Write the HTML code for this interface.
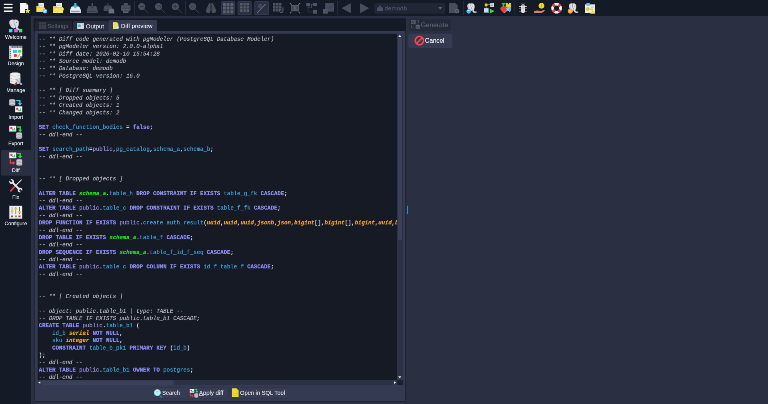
<!DOCTYPE html>
<html lang="en"><head><meta charset="utf-8"><title>pgModeler - Diff preview</title>
<style>
html,body{margin:0;padding:0;background:#2a2f42;overflow:hidden;}
body{width:768px;height:404px;position:relative;}
#root{position:absolute;left:0;top:0;width:1920px;height:1010px;transform:scale(0.4);transform-origin:0 0;will-change:transform;
  background:#2a2f42;font-family:"Liberation Sans",sans-serif;color:#e8e8ee;overflow:hidden;text-shadow:0 0 0.7px currentColor;}
#root *{box-sizing:border-box;}
.abs{position:absolute;}
#toolbar{left:0;top:0;width:1920px;height:40px;background:#151b26;}
#sidebar{left:0;top:40px;width:77.5px;height:970px;background:#151b26;}
.sb{position:absolute;left:1.5px;width:77px;height:64px;border-radius:5px 0 0 5px;}
.sb.sel{background:#2a2f42;}
.sb svg{position:absolute;left:21px;top:6px;width:33px;height:33px;}
.sb .lb{position:absolute;left:-10px;right:-9px;top:42px;text-align:center;font-size:13px;line-height:18px;color:#dcdde4;}
.tbi{position:absolute;top:7px;width:27px;height:27px;}
.tbi svg{width:27px;height:27px;display:block;}
.tsep{position:absolute;top:3px;width:2px;height:34px;background:#262b3a;}
.tgl{position:absolute;top:3px;width:35px;height:35px;background:#2a2f42;border:2px solid #333950;border-radius:4px;}
#tabbar{left:84px;top:46px;width:931px;height:32px;background:#151b26;}
.tab{position:absolute;font-size:15px;white-space:nowrap;}
.tab svg{position:absolute;}
.tab span{position:absolute;}
#pane{left:85px;top:77px;width:931px;height:927.5px;background:#343a51;border:solid #212634;border-width:0 3.5px 2.5px 2.5px;border-radius:0 0 5px 5px;}
#editor{left:93.5px;top:84px;width:913px;height:878px;background:#161a25;overflow:hidden;}
#code{position:absolute;left:3.5px;top:4.8px;font-family:"Liberation Mono",monospace;font-size:14px;line-height:18.39px;white-space:pre;color:#e4e4ea;text-shadow:0 0 1px currentColor;}
.ln{height:18.39px;}
.c{color:#b0b1ba;font-style:italic;}
.k{color:#878aec;font-weight:bold;}
.i{color:#3c9bd2;}
.p{color:#9189de;}
.g{color:#1fd41f;font-weight:bold;font-style:italic;}
.t{color:#f0a020;font-weight:bold;font-style:italic;}
#vsb{left:899.5px;top:0;width:13.5px;height:866px;background:#2c3145;}
#vsb .h{position:absolute;left:1.5px;top:10px;width:10.5px;height:505px;background:#3a4059;border-radius:2px;}
#hsb{left:0;top:866px;width:899.5px;height:12px;background:#2c3145;}
.ab{position:absolute;background:#31374c;}
#hsb .h{position:absolute;left:10px;top:0.5px;width:330px;height:11px;background:#3a4059;border-radius:2px;}
#corner{left:899.5px;top:866px;width:13.5px;height:12px;background:#1d212d;}
.btn{position:absolute;top:967.5px;height:29px;background:#363c53;border:1.5px solid #2e3348;border-radius:5px;font-size:14px;color:#d8d8df;white-space:nowrap;}
.btn svg{position:absolute;}
.btn span{position:absolute;top:5.5px;line-height:17px;}
#gen{left:1023px;top:46.5px;width:105px;height:30.5px;background:#252a39;border-radius:4px;color:#595e6f;font-size:16.4px;}
#cancel{left:1020.5px;top:83.5px;width:110px;height:36px;background:#353b53;border-radius:5px;color:#eeeef2;font-size:15.6px;}
#split{left:1017.5px;top:514px;width:2.5px;height:21px;background:#2c8ed2;}
</style></head>
<body>
<div id="root">
<div id="toolbar" class="abs"><div class="tgl" style="left:552.5px;width:34.4px"></div><div class="tgl" style="left:593.8px;width:35.2px"></div><div class="tgl" style="left:635.8px;width:35.8px"></div><div class="tsep" style="left:335.2px"></div><div class="tsep" style="left:462.5px"></div><div class="tsep" style="left:842.8px"></div><div class="tsep" style="left:1157.8px"></div><div class="tsep" style="left:1285.9px"></div><div class="tbi" style="left:6.8px"><svg viewBox="0 0 26 26"><rect x="2.4" y="2.2" width="21.2" height="3.5" rx="1" fill="#f0f0f3"/><rect x="2.4" y="10.3" width="21.2" height="3.5" rx="1" fill="#f0f0f3"/><rect x="2.4" y="18.6" width="21.2" height="3.5" rx="1" fill="#f0f0f3"/></svg></div><div class="tbi" style="left:48.8px"><svg viewBox="0 0 26 26"><path d="M1 0 H15 L21 6 V15 H13 V25 H1 Z" fill="#f6f6f8"/><path d="M15 0 V6 H21 Z" fill="#c8c9cf"/><path d="M19.5 13 L21.4 17.4 L26 17.8 L22.5 20.8 L23.6 25.4 L19.5 23 L15.4 25.4 L16.5 20.8 L13 17.8 L17.6 17.4 Z" fill="#f3e35c"/></svg></div><div class="tbi" style="left:90.5px"><svg viewBox="0 0 26 26"><rect x="5" y="0" width="13" height="12" fill="#f3f3f5"/><path d="M7 3h8M7 6h8" stroke="#aaa" stroke-width="1"/><path d="M0 7.5 H7 L9 10 H19 V22 H0 Z" fill="#e9d040"/><path d="M0 22 L2.5 12 H21 L19 22 Z" fill="#f5e362"/><circle cx="20.5" cy="20" r="5.6" fill="#40c4f0"/><circle cx="20.5" cy="20" r="3.3" fill="#e9f6ff"/><path d="M20.5 18 V20.3 H22.4" stroke="#2277bb" stroke-width="1" fill="none"/></svg></div><div class="tbi" style="left:132.5px"><svg viewBox="0 0 26 26"><rect x="7" y="0" width="14" height="12" fill="#f3f3f5"/><path d="M9 3h9M9 6h9" stroke="#aaa" stroke-width="1"/><path d="M0 8 H8 L10 10.5 H24 V24.5 H0 Z" fill="#e9d040"/><path d="M0 24.5 L3 13 H26 L23 24.5 Z" fill="#f5e362"/></svg></div><div class="tbi" style="left:174.5px"><svg viewBox="0 0 26 26"><path d="M4 9 H22 L26 17 V25 H0 V17 Z" fill="#e9edf2"/><path d="M0 17 H26 V25 H0 Z" fill="#d5dbe3"/><rect x="3" y="19.5" width="20" height="2.4" fill="#8a93a0"/><rect x="10.3" y="0" width="5.4" height="7" fill="#38b4ee"/><path d="M6.5 6.5 H19.5 L13 14 Z" fill="#38b4ee"/></svg></div><div class="tbi" style="left:216.5px"><svg viewBox="0 0 26 26"><path d="M3.5 8 H22.5 L26 17 V25 H0 V17 Z" fill="#494d5c"/><rect x="3" y="19" width="20" height="2.6" fill="#151b26" opacity="0.3"/><rect x="11.4" y="0" width="3.2" height="9" fill="#494d5c"/><path d="M7.5 8 H18.5 L13 15 Z" fill="#3c404e"/></svg></div><div class="tbi" style="left:259.0px"><svg viewBox="0 0 26 26"><g transform="scale(0.8)"><path d="M3.5 8 H22.5 L26 17 V25 H0 V17 Z" fill="#494d5c"/><rect x="3" y="19" width="20" height="2.6" fill="#151b26" opacity="0.3"/><rect x="11.4" y="0" width="3.2" height="9" fill="#494d5c"/><path d="M7.5 8 H18.5 L13 15 Z" fill="#3c404e"/></g><g transform="translate(12,12) scale(0.54)"><path d="M4 4 H22 L26 17 V25 H0 V17 Z" fill="#6a6f80"/></g></svg></div><div class="tbi" style="left:300.8px"><svg viewBox="0 0 26 26"><rect x="8" y="0" width="10" height="7" fill="#494d5c"/><rect x="1.5" y="6" width="23" height="13" rx="2.5" fill="#494d5c"/><rect x="6.5" y="15.5" width="13" height="9.5" fill="#5d6170"/><path d="M8 18.5h10M8 21.5h10" stroke="#151b26" stroke-width="1.2" opacity="0.5"/><rect x="5" y="12" width="16" height="2" fill="#151b26" opacity="0.3"/></svg></div><div class="tbi" style="left:345.0px"><svg viewBox="0 0 26 26"><path d="M14 14 L25.5 25.5" stroke="#3b3f4d" stroke-width="1.7"/><circle cx="9" cy="9" r="8.7" fill="#494d5c"/><g transform="translate(-1,-1)"><rect x="5" y="9" width="10" height="2.2" fill="#151b26" opacity="0.45"/></g></svg></div><div class="tbi" style="left:386.8px"><svg viewBox="0 0 26 26"><path d="M14 14 L25.5 25.5" stroke="#3b3f4d" stroke-width="1.7"/><circle cx="9" cy="9" r="8.7" fill="#494d5c"/><g transform="translate(-1,-1)"><path d="M6 8 h3 v5 M11.5 8 h3 v5" stroke="#151b26" stroke-width="1.6" fill="none" opacity="0.4"/></g></svg></div><div class="tbi" style="left:429.0px"><svg viewBox="0 0 26 26"><path d="M14 14 L25.5 25.5" stroke="#3b3f4d" stroke-width="1.7"/><circle cx="9" cy="9" r="8.7" fill="#494d5c"/><g transform="translate(-1,-1)"><rect x="5" y="9" width="10" height="2.2" fill="#151b26" opacity="0.45"/><rect x="8.9" y="5" width="2.2" height="10" fill="#151b26" opacity="0.45"/></g></svg></div><div class="tbi" style="left:472.0px"><svg viewBox="0 0 26 26"><path d="M14 14 L25.5 25.5" stroke="#3b3f4d" stroke-width="1.7"/><circle cx="9" cy="9" r="8.7" fill="#494d5c"/><g transform="translate(-1,-1)"><circle cx="10" cy="10" r="4" fill="none" stroke="#151b26" stroke-width="1.6" opacity="0.35"/></g></svg></div><div class="tbi" style="left:514.0px"><svg viewBox="0 0 26 26"><path d="M8.5 1 H12 V20 H1 V17 Z" fill="#494d5c"/><circle cx="6.4" cy="19.6" r="5.4" fill="#494d5c"/><path d="M17.5 1 H14 V20 H25 V17 Z" fill="#494d5c"/><circle cx="19.6" cy="19.6" r="5.4" fill="#494d5c"/><path d="M4 12 H12 M14 12 H22" stroke="#151b26" stroke-width="1" opacity="0.35"/></svg></div><div class="tbi" style="left:556.5px"><svg viewBox="0 0 26 26"><g transform="translate(0.5,0.5) scale(0.96)"><rect x="0" y="0" width="26" height="26" fill="#5d616f"/><path d="M8.67 0 V26 M0 8.67 H26 M17.33 0 V26 M0 17.33 H26 " stroke="#151b26" stroke-width="3.0" opacity="0.5" fill="none"/></g></svg></div><div class="tbi" style="left:598.0px"><svg viewBox="0 0 26 26"><g transform="translate(2,0) scale(0.85)"><rect x="0" y="0" width="26" height="26" fill="#565a68"/><path d="M8.67 0 V26 M0 8.67 H26 M17.33 0 V26 M0 17.33 H26 " stroke="#151b26" stroke-width="3.0" opacity="0.5" fill="none"/></g></svg></div><div class="tbi" style="left:640.0px"><svg viewBox="0 0 26 26"><circle cx="10" cy="8" r="5.5" fill="#414558"/><path d="M3 25 H23" stroke="#3a3e4e" stroke-width="1" stroke-dasharray="2 1.5"/><path d="M3 24 L23 3" stroke="#70748a" stroke-width="1.8"/></svg></div><div class="tbi" style="left:682.2px"><svg viewBox="0 0 26 26"><g transform="scale(0.8)"><rect x="0" y="0" width="26" height="26" fill="#4f5362"/><path d="M8.67 0 V26 M0 8.67 H26 M17.33 0 V26 M0 17.33 H26 " stroke="#151b26" stroke-width="3.2" opacity="0.5" fill="none"/></g><path d="M24.5 11 V19.5 A4 4 0 0 1 16.5 19.5 V17" fill="none" stroke="#151b26" stroke-width="4.6"/><path d="M24.5 11 V19.5 A4 4 0 0 1 16.5 19.5 V17" fill="none" stroke="#5c606e" stroke-width="2.2"/><path d="M13.2 18 L19.8 18 L16.5 13.5 Z" fill="#5c606e"/></svg></div><div class="tbi" style="left:724.0px"><svg viewBox="0 0 26 26"><path d="M0.5 0.5 L4.5 4.5 M25.5 0.5 L21.5 4.5 M25.5 25.5 L21.5 21.5 M0.5 25.5 L4.5 21.5" fill="none" stroke="#7d818c" stroke-width="2"/><rect x="4" y="5" width="18.5" height="15.5" rx="1" fill="#585c69"/><rect x="6" y="8" width="14.5" height="10" fill="#151b26" opacity="0.4"/><path d="M8.5 9v8M11.5 9v8M14.5 9v8M17.5 9v8" stroke="#6a6e7a" stroke-width="1.2"/></svg></div><div class="tbi" style="left:766.2px"><svg viewBox="0 0 26 26"><rect x="0" y="0" width="9" height="8" fill="#4f5362"/><rect x="16" y="0" width="10" height="8" fill="#4f5362"/><rect x="16" y="17" width="10" height="9" fill="#4f5362"/><path d="M4 8 V22 H16 M4 12 H12 V4 H16" fill="none" stroke="#4f5362" stroke-width="1.2"/></svg></div><div class="tbi" style="left:808.2px"><svg viewBox="0 0 26 26"><rect x="5" y="0" width="21" height="21" fill="#454a5d"/><rect x="0" y="15" width="11" height="11" fill="#4f5362"/><path d="M14 10 l3 3 l6 -7" stroke="#3a3f52" stroke-width="1.5" fill="none"/></svg></div><div class="tbi" style="left:852.5px"><svg viewBox="0 0 26 26"><path d="M23 1 V25 L1 13 Z" fill="#494d5c"/></svg></div><div class="tbi" style="left:897.2px"><svg viewBox="0 0 26 26"><path d="M3 1 V25 L25 13 Z" fill="#494d5c"/></svg></div><div class="tbi" style="left:1122.0px"><svg viewBox="0 0 26 26"><path d="M1 0 H15 L21 6 V25 H1 Z" fill="#494d5c"/><circle cx="20" cy="20" r="5.5" fill="#5f6476"/><circle cx="20" cy="20" r="2.6" fill="#494d5c"/></svg></div><div class="tbi" style="left:1166.2px"><svg viewBox="0 0 26 26"><g transform="translate(-2.5,0) scale(1.0)"><path d="M5 9 C4 3 9 0.5 13.5 2 C18 0.5 23 3 22 10 C22 14 20.5 16 20 19 C21.5 22 25 21 28 21.5 C27 24.5 21 25 18.5 22.5 C17 21 17 18 16.5 17 C15 20 12.5 21 11 19 C8 18 6 14 5 9 Z" fill="#e0e0e4" stroke="#9a9ca6" stroke-width="1"/><path d="M13.5 3 C12.5 8 13.5 12 16.5 16" fill="none" stroke="#8d8f99" stroke-width="1.2"/><path d="M8 6 C7 9 8 13 10 16" fill="none" stroke="#b5b7bf" stroke-width="1"/><circle cx="18" cy="8" r="1" fill="#777"/></g><circle cx="5.5" cy="20.5" r="5.5" fill="#27b5e8"/><path d="M2.5 19 h6 M2.5 22 h6" stroke="#dff" stroke-width="1.2"/></svg></div><div class="tbi" style="left:1208.8px"><svg viewBox="0 0 26 26"><circle cx="6" cy="5" r="3.6" fill="#e8c822"/><path d="M9 5 H17 M6 8 V14" stroke="#c9cbd2" stroke-width="1.6"/><rect x="16" y="0" width="9" height="10" fill="#d9dbe0"/><path d="M18 3h5M18 6h5" stroke="#777" stroke-width="1"/><rect x="1" y="13" width="11" height="9" fill="#bfe6f8"/><rect x="0" y="22" width="13" height="3" fill="#8a8d98"/><path d="M15 14 V26 L26 20 Z" fill="#39d24f"/></svg></div><div class="tbi" style="left:1250.5px"><svg viewBox="0 0 26 26"><path d="M3 0 H12 V4 H9.5 V10 H5.5 V4 H3 Z" fill="#2fc84a"/><path d="M13 0 H17 L19 4 L21 0 H25 V10 H13 Z" fill="#eccd25"/><path d="M8 10 C12 7 16 10 16 14 C16 19 11 21 8 25 C5 21 0 19 0 14 C0 10 4 7 8 10 Z" fill="#ee3a3a"/><rect x="15" y="10" width="10" height="9" fill="#46c5ee"/><path d="M10 24 L22 12 M14 13 L24 22" stroke="#c9ced6" stroke-width="1.6"/></svg></div><div class="tbi" style="left:1293.5px"><svg viewBox="0 0 26 26"><path d="M3.5 9 H9 M3.5 14.5 H9 M3.5 20 H9 M17 9 H22.5 M17 14.5 H22.5 M17 20 H22.5 M10 1 L11.5 4 M16 1 L14.5 4" stroke="#d8d8de" stroke-width="1.3"/><rect x="8.3" y="4" width="9.4" height="21" rx="4.7" fill="#dedee3"/><rect x="9.3" y="3.5" width="7.4" height="4" rx="2" fill="#9a9ca6"/><path d="M9 10.5 H17 M9 13.5 H17" stroke="#a9abb3" stroke-width="1"/></svg></div><div class="tbi" style="left:1334.8px"><svg viewBox="0 0 26 26"><circle cx="18" cy="7" r="7" fill="#efd925"/><path d="M18 3 v8 M16 5.5 h3.4 M16.6 8.6 h3.4" stroke="#c9a80f" stroke-width="1.1"/><path d="M0 21 C4 18 9 18 13 19.5 H18 C21 18.5 24 17 26 17.5 C25 22 18 25 13 25 C8 25 4 24 0 25.5 Z" fill="#cf8468"/></svg></div><div class="tbi" style="left:1377.8px"><svg viewBox="0 0 26 26"><circle cx="13" cy="13" r="9.6" fill="none" stroke="#f4f4f6" stroke-width="6.4"/><path d="M13 0.2 V6.6 M13 19.4 V25.8 M0.2 13 H6.6 M19.4 13 H25.8" stroke="#e8403a" stroke-width="6.6" transform="rotate(45 13 13)"/></svg></div><div class="tbi" style="left:1419.2px"><svg viewBox="0 0 26 26"><g transform="translate(-1.5,0) scale(1.0)"><path d="M5 9 C4 3 9 0.5 13.5 2 C18 0.5 23 3 22 10 C22 14 20.5 16 20 19 C21.5 22 25 21 28 21.5 C27 24.5 21 25 18.5 22.5 C17 21 17 18 16.5 17 C15 20 12.5 21 11 19 C8 18 6 14 5 9 Z" fill="#e0e0e4" stroke="#9a9ca6" stroke-width="1"/><path d="M13.5 3 C12.5 8 13.5 12 16.5 16" fill="none" stroke="#8d8f99" stroke-width="1.2"/><path d="M8 6 C7 9 8 13 10 16" fill="none" stroke="#b5b7bf" stroke-width="1"/><circle cx="18" cy="8" r="1" fill="#777"/></g><circle cx="6.5" cy="20" r="6" fill="#f2a91f"/><circle cx="6.5" cy="20" r="2.8" fill="#f7c851"/></svg></div><div class="tbi" style="left:1461.2px"><svg viewBox="0 0 26 26"><rect x="1" y="4" width="24" height="20" fill="#f0f0f3"/><rect x="5" y="0" width="8" height="7" fill="#56c4f0"/><path d="M15 8h7M15 12h7" stroke="#9a9ca6" stroke-width="1.2"/><circle cx="8" cy="15" r="4.4" fill="#e9c91f"/><path d="M11 15 H20 V19 M16 15 V18" stroke="#e9c91f" stroke-width="2.2" fill="none"/><path d="M20 17 L26 26 H14 Z" fill="#f0de2a"/></svg></div><div class="abs" style="left:935.5px;top:6.5px;width:177px;height:27px;background:#212635;border-radius:4px;"><svg class="abs" style="left:6px;top:5px" width="16" height="16" viewBox="0 0 26 26"><path d="M3 10 H23 L26 18 V25 H0 V18 Z" fill="#4b5064"/><rect x="8" y="3" width="10" height="8" fill="#4b5064"/></svg><span class="abs" style="left:26px;top:4px;font-size:15.5px;line-height:19px;color:#4f5466">demodb</span><svg class="abs" style="left:160px;top:11px" width="9" height="6" viewBox="0 0 9 6"><path d="M0 0 H9 L4.5 6 Z" fill="#5d6275"/></svg></div></div>
<div id="sidebar" class="abs"><div class="sb" style="top:1.5px"><svg viewBox="0 0 32 32"><g transform="translate(-6,-0.8) scale(1.32,1.15)"><path d="M5 9 C4 3 9 0.5 13.5 2 C18 0.5 23 3 22 10 C22 14 20.5 16 20 19 C21.5 22 25 21 28 21.5 C27 24.5 21 25 18.5 22.5 C17 21 17 18 16.5 17 C15 20 12.5 21 11 19 C8 18 6 14 5 9 Z" fill="#e0e0e4" stroke="#9a9ca6" stroke-width="1"/><path d="M13.5 3 C12.5 8 13.5 12 16.5 16" fill="none" stroke="#8d8f99" stroke-width="1.2"/><path d="M8 6 C7 9 8 13 10 16" fill="none" stroke="#b5b7bf" stroke-width="1"/><circle cx="18" cy="8" r="1" fill="#777"/></g><rect x="0" y="23.5" width="8" height="8.5" fill="#3fd3f5"/><rect x="12" y="23.5" width="8.5" height="8.5" fill="#d462f2"/><rect x="23.5" y="23.5" width="8.5" height="8.5" fill="#46e268"/></svg><div class="lb">Welcome</div></div>
<div class="sb" style="top:68.2px"><svg viewBox="0 0 32 32"><path d="M0 0 H32 V26 L26 32 H0 Z" fill="#f4f4f6"/><rect x="0" y="0" width="32" height="6" fill="#9c9ea8"/><rect x="0" y="0" width="5" height="32" fill="#c9cad0"/><path d="M1 9h3M1 14h3M1 19h3M1 24h3M1 29h3M8 1v4M12 1v4M16 1v4M20 1v4M24 1v4M28 1v4" stroke="#4a4c55" stroke-width="1"/><path d="M32 26 L26 32 L26 26 Z" fill="#6d6f78"/><rect x="9.5" y="10" width="10" height="7.5" fill="#39caf2"/><rect x="21.5" y="10" width="8" height="7" fill="#3fdc55"/><ellipse cx="15" cy="24" rx="3.6" ry="4" fill="#ee3a3a"/><path d="M26 20.5 L20 29" stroke="#d9c21f" stroke-width="3"/></svg><div class="lb">Design</div></div>
<div class="sb" style="top:134.9px"><svg viewBox="0 0 32 32"><path d="M2 4.5600000000000005 L2 23.939999999999998 A12.5 4.5600000000000005 0 0 0 27 23.939999999999998 L27 4.5600000000000005 Z" fill="#ededf0" stroke="#a3a5ae" stroke-width="1"/><ellipse cx="14.5" cy="4.5600000000000005" rx="12.5" ry="4.5600000000000005" fill="#ededf0" stroke="#a3a5ae" stroke-width="1"/><path d="M2 11.969999999999999 A12.5 4.5600000000000005 0 0 0 27 11.969999999999999 M2 18.810000000000002 A12.5 4.5600000000000005 0 0 0 27 18.810000000000002" fill="none" stroke="#a3a5ae" stroke-width="1"/><path d="M12.5 31 L19.5 24" stroke="#e33434" stroke-width="4"/><path d="M18 17.5 L29.5 29" stroke="#9db3c4" stroke-width="3.6"/><path d="M27 15 L19 25" stroke="#b9cad6" stroke-width="2.4"/><circle cx="29" cy="28.5" r="2.6" fill="#9db3c4"/><circle cx="18" cy="17.5" r="2.4" fill="#9db3c4"/></svg><div class="lb">Manage</div></div>
<div class="sb" style="top:201.6px"><svg viewBox="0 0 32 32"><path d="M0 2.48 L0 13.02 A7.25 2.48 0 0 0 14.5 13.02 L14.5 2.48 Z" fill="#cdced3" stroke="#8f919b" stroke-width="1"/><ellipse cx="7.25" cy="2.48" rx="7.25" ry="2.48" fill="#cdced3" stroke="#8f919b" stroke-width="1"/><path d="M0 6.51 A7.25 2.48 0 0 0 14.5 6.51 M0 10.23 A7.25 2.48 0 0 0 14.5 10.23" fill="none" stroke="#8f919b" stroke-width="1"/><path d="M17 3.5 H26 V11" fill="none" stroke="#42c4ee" stroke-width="3.2"/><path d="M20.5 10 H31.5 L26 16 Z" fill="#42c4ee"/><rect x="14.5" y="17.5" width="17" height="14" fill="#f4f4f6" stroke="#b9bac2" stroke-width="1"/><circle cx="19.6" cy="23.1" r="2.8000000000000003" fill="#ee3b3b"/><rect x="20.28" y="25.34" width="3.74" height="3.7800000000000002" fill="#35bdf0"/><path d="M23.68 29.259999999999998 L26.740000000000002 21.0 L29.8 29.259999999999998 Z" fill="#35d24a"/></svg><div class="lb">Import</div></div>
<div class="sb" style="top:268.3px"><svg viewBox="0 0 32 32"><rect x="0.5" y="0.5" width="16.5" height="13.5" fill="#f4f4f6" stroke="#b9bac2" stroke-width="1"/><circle cx="5.45" cy="5.9" r="2.7" fill="#ee3b3b"/><rect x="6.11" y="8.06" width="3.63" height="3.6450000000000005" fill="#35bdf0"/><path d="M9.41 11.84 L12.379999999999999 3.875 L15.35 11.84 Z" fill="#35d24a"/><path d="M19 3.5 H26.5 V11" fill="none" stroke="#35d24a" stroke-width="3.2"/><path d="M21 10 H32 L26.5 16 Z" fill="#35d24a"/><path d="M17 18.98 L17 29.52 A7.0 2.48 0 0 0 31 29.52 L31 18.98 Z" fill="#cdced3" stroke="#8f919b" stroke-width="1"/><ellipse cx="24.0" cy="18.98" rx="7.0" ry="2.48" fill="#cdced3" stroke="#8f919b" stroke-width="1"/><path d="M17 23.009999999999998 A7.0 2.48 0 0 0 31 23.009999999999998 M17 26.73 A7.0 2.48 0 0 0 31 26.73" fill="none" stroke="#8f919b" stroke-width="1"/></svg><div class="lb">Export</div></div>
<div class="sb sel" style="top:335.0px"><svg viewBox="0 0 32 32"><rect x="0.5" y="0.5" width="16.5" height="13.5" fill="#f4f4f6" stroke="#b9bac2" stroke-width="1"/><circle cx="5.45" cy="5.9" r="2.7" fill="#ee3b3b"/><rect x="6.11" y="8.06" width="3.63" height="3.6450000000000005" fill="#35bdf0"/><path d="M9.41 11.84 L12.379999999999999 3.875 L15.35 11.84 Z" fill="#35d24a"/><path d="M19 3 H26.5 V10" fill="none" stroke="#35d24a" stroke-width="3.2"/><path d="M21 9 H32 L26.5 15 Z" fill="#35d24a"/><path d="M17.5 18.98 L17.5 29.52 A7.0 2.48 0 0 0 31.5 29.52 L31.5 18.98 Z" fill="#cdced3" stroke="#8f919b" stroke-width="1"/><ellipse cx="24.5" cy="18.98" rx="7.0" ry="2.48" fill="#cdced3" stroke="#8f919b" stroke-width="1"/><path d="M17.5 23.009999999999998 A7.0 2.48 0 0 0 31.5 23.009999999999998 M17.5 26.73 A7.0 2.48 0 0 0 31.5 26.73" fill="none" stroke="#8f919b" stroke-width="1"/><path d="M2.5 17 V25.5 H9.5" fill="none" stroke="#ee3a3a" stroke-width="3.2"/><path d="M8.5 20 V31 L14.5 25.5 Z" fill="#ee3a3a"/></svg><div class="lb">Diff</div></div>
<div class="sb" style="top:401.7px"><svg viewBox="0 0 32 32"><path d="M28 3 L15 16" stroke="#e8e8ec" stroke-width="2.4"/><path d="M15 16 L4 28" stroke="#ee3a3a" stroke-width="4.4" stroke-linecap="round"/><path d="M31 0 L27 2 L29 4 Z" fill="#e8e8ec"/><path d="M6 6 L26 26" stroke="#e8e8ec" stroke-width="4.6"/><circle cx="5.8" cy="5.8" r="5.8" fill="#e8e8ec"/><circle cx="26.2" cy="26.2" r="5.8" fill="#e8e8ec"/><path d="M0 0 L6.5 6.5" stroke="#151b26" stroke-width="4"/><path d="M32 32 L25.5 25.5" stroke="#151b26" stroke-width="4"/></svg><div class="lb">Fix</div></div>
<div class="sb" style="top:468.4px"><svg viewBox="0 0 32 32"><rect x="0.5" y="0.5" width="31" height="31" fill="#efeff2" stroke="#9a9ca6"/><path d="M7 3v18M16 3v18M25 3v18" stroke="#55575f" stroke-width="1.6"/><rect x="4" y="11" width="6" height="4.5" fill="#e7c521"/><rect x="13" y="5" width="6" height="4.5" fill="#e7c521"/><rect x="22" y="13" width="6" height="4.5" fill="#e7c521"/><rect x="4.5" y="24" width="5" height="4.5" fill="#e03131"/><rect x="13.5" y="24" width="5" height="4.5" fill="#2fbf4a"/><rect x="22.5" y="24" width="5" height="4.5" fill="#e03131"/></svg><div class="lb">Configure</div></div>
</div>
<div id="tabbar" class="abs">
 <div class="tab" style="left:3.5px;top:7px;width:92.5px;height:25px;background:#202432;border-radius:4px 4px 0 0;color:#555a6b;"><svg style="left:10px;top:2.5px" width="17" height="17" viewBox="0 0 19 19"><rect width="19" height="19" fill="#3d4152"/><path d="M0 6.5H19M0 12.5H19M7 0V19M13 0V19" stroke="#262a38" stroke-width="1.2"/></svg><span style="left:31px;top:4px;font-size:14.4px">Settings</span></div>
 <div class="tab" style="left:99px;top:7px;width:87px;height:25px;background:#272c3e;border-radius:4px 4px 0 0;color:#dcdce3;"><svg style="left:9.5px;top:3.5px" width="17" height="16" viewBox="0 0 20 19"><rect width="20" height="19" rx="1.5" fill="#c9cacf"/><rect x="1.5" y="2.5" width="17" height="14" fill="#dcdde1"/><circle cx="6.5" cy="9" r="4.2" fill="#2fb6e6"/><path d="M13 6h4M13 9h4" stroke="#a0a2aa" stroke-width="1.2"/></svg><span style="left:31.5px;top:3.5px;font-size:15.2px">Output</span></div>
 <div class="tab" style="left:187px;top:4px;width:121.5px;height:28px;background:#343a51;border-radius:4px 4px 0 0;color:#e2e2e8;"><svg style="left:11px;top:5px" width="15" height="17.5" viewBox="0 0 19 21"><path d="M0 0 H13 L18 5 V21 H0 Z" fill="#f2e352"/><path d="M13 0 V5 H18 Z" fill="#d4c232"/><path d="M4 6h6M4 9h8" stroke="#d9b93a" stroke-width="1.4"/><circle cx="14.5" cy="16.5" r="4.8" fill="#9fe2f6"/><circle cx="14.5" cy="16.5" r="2.2" fill="#eafaff"/></svg><span style="left:31.5px;top:6px;font-size:15.1px">Diff preview</span></div>
</div>
<div id="pane" class="abs"></div>
<div id="editor" class="abs">
 <div id="code"><div class="ln"><span class="c">-- ** Diff code generated with pgModeler (PostgreSQL Database Modeler)</span></div><div class="ln"><span class="c">-- ** pgModeler version: 2.0.0-alpha1</span></div><div class="ln"><span class="c">-- ** Diff date: 2026-02-10 15:54:28</span></div><div class="ln"><span class="c">-- ** Source model: demodb</span></div><div class="ln"><span class="c">-- ** Database: demodb</span></div><div class="ln"><span class="c">-- ** PostgreSQL version: 16.0</span></div><div class="ln">&nbsp;</div><div class="ln"><span class="c">-- ** [ Diff summary ]</span></div><div class="ln"><span class="c">-- ** Dropped objects: 5</span></div><div class="ln"><span class="c">-- ** Created objects: 1</span></div><div class="ln"><span class="c">-- ** Changed objects: 2</span></div><div class="ln">&nbsp;</div><div class="ln"><span class="k">SET</span> <span class="i">check_function_bodies</span> = <span class="k">false</span>;</div><div class="ln"><span class="c">-- ddl-end --</span></div><div class="ln">&nbsp;</div><div class="ln"><span class="k">SET</span> <span class="i">search_path</span>=<span class="p">public</span>,<span class="i">pg_catalog</span>,<span class="i">schema_a</span>,<span class="i">schema_b</span>;</div><div class="ln"><span class="c">-- ddl-end --</span></div><div class="ln">&nbsp;</div><div class="ln">&nbsp;</div><div class="ln"><span class="c">-- ** [ Dropped objects ]</span></div><div class="ln">&nbsp;</div><div class="ln"><span class="k">ALTER TABLE</span> <span class="g">schema_a</span>.<span class="i">table_h</span> <span class="k">DROP CONSTRAINT IF EXISTS</span> <span class="i">table_g_fk</span> <span class="k">CASCADE</span>;</div><div class="ln"><span class="c">-- ddl-end --</span></div><div class="ln"><span class="k">ALTER TABLE</span> <span class="p">public</span>.<span class="i">table_c</span> <span class="k">DROP CONSTRAINT IF EXISTS</span> <span class="i">table_f_fk</span> <span class="k">CASCADE</span>;</div><div class="ln"><span class="c">-- ddl-end --</span></div><div class="ln"><span class="k">DROP FUNCTION IF EXISTS</span> <span class="p">public</span>.<span class="i">create_auth_result</span>(<span class="t">uuid</span>,<span class="t">uuid</span>,<span class="t">uuid</span>,<span class="t">jsonb</span>,<span class="t">json</span>,<span class="t">bigint</span>[],<span class="t">bigint</span>[],<span class="t">bigint</span>,<span class="t">uuid</span>,<span class="t">boolean</span>,<span class="t">text</span>) <span class="k">CASCADE</span>;</div><div class="ln"><span class="c">-- ddl-end --</span></div><div class="ln"><span class="k">DROP TABLE IF EXISTS</span> <span class="g">schema_a</span>.<span class="i">table_f</span> <span class="k">CASCADE</span>;</div><div class="ln"><span class="c">-- ddl-end --</span></div><div class="ln"><span class="k">DROP SEQUENCE IF EXISTS</span> <span class="g">schema_a</span>.<span class="i">table_f_id_f_seq</span> <span class="k">CASCADE</span>;</div><div class="ln"><span class="c">-- ddl-end --</span></div><div class="ln"><span class="k">ALTER TABLE</span> <span class="p">public</span>.<span class="i">table_c</span> <span class="k">DROP COLUMN IF EXISTS</span> <span class="i">id_f_table_f</span> <span class="k">CASCADE</span>;</div><div class="ln"><span class="c">-- ddl-end --</span></div><div class="ln">&nbsp;</div><div class="ln">&nbsp;</div><div class="ln"><span class="c">-- ** [ Created objects ]</span></div><div class="ln">&nbsp;</div><div class="ln"><span class="c">-- object: public.table_b1 | type: TABLE --</span></div><div class="ln"><span class="c">-- DROP TABLE IF EXISTS public.table_b1 CASCADE;</span></div><div class="ln"><span class="k">CREATE TABLE</span> <span class="p">public</span>.<span class="i">table_b1</span> (</div><div class="ln">    <span class="i">id_b</span> <span class="t">serial</span> <span class="k">NOT NULL</span>,</div><div class="ln">    <span class="i">sku</span> <span class="t">integer</span> <span class="k">NOT NULL</span>,</div><div class="ln">    <span class="k">CONSTRAINT</span> <span class="i">table_b_pk1</span> <span class="k">PRIMARY KEY</span> (<span class="i">id_b</span>)</div><div class="ln">);</div><div class="ln"><span class="c">-- ddl-end --</span></div><div class="ln"><span class="k">ALTER TABLE</span> <span class="p">public</span>.<span class="i">table_b1</span> <span class="k">OWNER TO</span> <span class="i">postgres</span>;</div><div class="ln"><span class="c">-- ddl-end --</span></div></div>
 <div id="vsb" class="abs"><div class="ab" style="left:0;top:0;width:13.5px;height:10px"></div><div class="ab" style="left:0;top:855px;width:13.5px;height:11px"></div><div class="h"></div>
  <svg class="abs" style="left:3.2px;top:2.5px" width="7" height="5" viewBox="0 0 7 5"><path d="M0 5 L3.5 0 L7 5 Z" fill="#e8e8ee"/></svg>
  <svg class="abs" style="left:3.2px;top:857px" width="7" height="5" viewBox="0 0 7 5"><path d="M0 0 L3.5 5 L7 0 Z" fill="#e8e8ee"/></svg>
 </div>
 <div id="hsb" class="abs"><div class="ab" style="left:0;top:0;width:10px;height:12px"></div><div class="ab" style="left:889px;top:0;width:11px;height:12px"></div><div class="h"></div>
  <svg class="abs" style="left:2px;top:2.5px" width="5" height="7" viewBox="0 0 5 7"><path d="M5 0 L0 3.5 L5 7 Z" fill="#e8e8ee"/></svg>
  <svg class="abs" style="left:891px;top:2.5px" width="5" height="7" viewBox="0 0 5 7"><path d="M0 0 L5 3.5 L0 7 Z" fill="#e8e8ee"/></svg>
 </div>
 <div id="corner" class="abs"></div>
</div>
<div class="btn" style="left:380px;width:84.5px"><svg style="left:2px;top:2px" width="25" height="25" viewBox="0 0 25 25"><path d="M16 17 L23 24" stroke="#3f8f9c" stroke-width="2"/><circle cx="10.4" cy="10.5" r="8.6" fill="#8fdff0"/><circle cx="10.4" cy="10.5" r="6.6" fill="#c2f3fa"/><path d="M6.5 8.5h8M8 11.5h5" stroke="#6fc4d6" stroke-width="1.5"/></svg><span style="left:24.5px">Search</span></div>
<div class="btn" style="left:469px;width:98.5px"><svg style="left:4px;top:3px" width="22" height="22" viewBox="0 0 32 32"><rect x="0.5" y="0.5" width="16.5" height="13.5" fill="#f4f4f6" stroke="#b9bac2" stroke-width="1"/><circle cx="5.45" cy="5.9" r="2.7" fill="#ee3b3b"/><rect x="6.11" y="8.06" width="3.63" height="3.6450000000000005" fill="#35bdf0"/><path d="M9.41 11.84 L12.379999999999999 3.875 L15.35 11.84 Z" fill="#35d24a"/><path d="M19 3 H26.5 V10" fill="none" stroke="#35d24a" stroke-width="3.2"/><path d="M21 9 H32 L26.5 15 Z" fill="#35d24a"/><path d="M17.5 18.98 L17.5 29.52 A7.0 2.48 0 0 0 31.5 29.52 L31.5 18.98 Z" fill="#cdced3" stroke="#8f919b" stroke-width="1"/><ellipse cx="24.5" cy="18.98" rx="7.0" ry="2.48" fill="#cdced3" stroke="#8f919b" stroke-width="1"/><path d="M17.5 23.009999999999998 A7.0 2.48 0 0 0 31.5 23.009999999999998 M17.5 26.73 A7.0 2.48 0 0 0 31.5 26.73" fill="none" stroke="#8f919b" stroke-width="1"/><path d="M2.5 17 V25.5 H9.5" fill="none" stroke="#ee3a3a" stroke-width="3.2"/><path d="M8.5 20 V31 L14.5 25.5 Z" fill="#ee3a3a"/></svg><span style="left:27.5px;font-size:14.9px"><u>A</u>pply diff</span></div>
<div class="btn" style="left:572.5px;width:147.5px"><svg style="left:6.5px;top:2px" width="16.5" height="21.5" viewBox="0 0 17 22"><path d="M0 0 H12 L17 5 V22 H0 Z" fill="#efd830"/><path d="M12 0 V5 H17 Z" fill="#c9b21c"/><rect x="4" y="12" width="8" height="6" fill="#d9bf1c"/><path d="M5 14h6M5 16h6" stroke="#f7ea70" stroke-width="1"/></svg><span style="left:26.5px;font-size:14.35px">Open in SQL Tool</span></div>
<div id="gen" class="abs"><svg class="abs" style="left:4px;top:3.5px" width="23" height="23" viewBox="0 0 23 23"><rect x="0" y="0" width="12" height="10.5" fill="#535869"/><path d="M2 7.5 l2.5 -4 l2 4 l2.5 -4" stroke="#2a2e3d" stroke-width="1.2" fill="none"/><path d="M15 1.5 H19.5 V8 M1.5 13.5 V20 H8" stroke="#4c5163" stroke-width="1.6" fill="none"/><path d="M12 13 H23 V23 H12 Z" fill="#4c5163"/><ellipse cx="17.5" cy="13.5" rx="5.5" ry="2" fill="#5b6074"/></svg><span class="abs" style="left:29px;top:6.5px;line-height:19px">Generate</span></div>
<div id="cancel" class="abs"><svg class="abs" style="left:15px;top:5px" width="25" height="25" viewBox="0 0 25 25"><circle cx="12.5" cy="12.5" r="10.3" fill="none" stroke="#f04e4c" stroke-width="3.8"/><path d="M5.2 19.8 L19.8 5.2" stroke="#f04e4c" stroke-width="3.6"/></svg><span class="abs" style="left:42px;top:9.5px;line-height:18px">Cancel</span></div>
<div id="split" class="abs"></div>
</div>
</body></html>
